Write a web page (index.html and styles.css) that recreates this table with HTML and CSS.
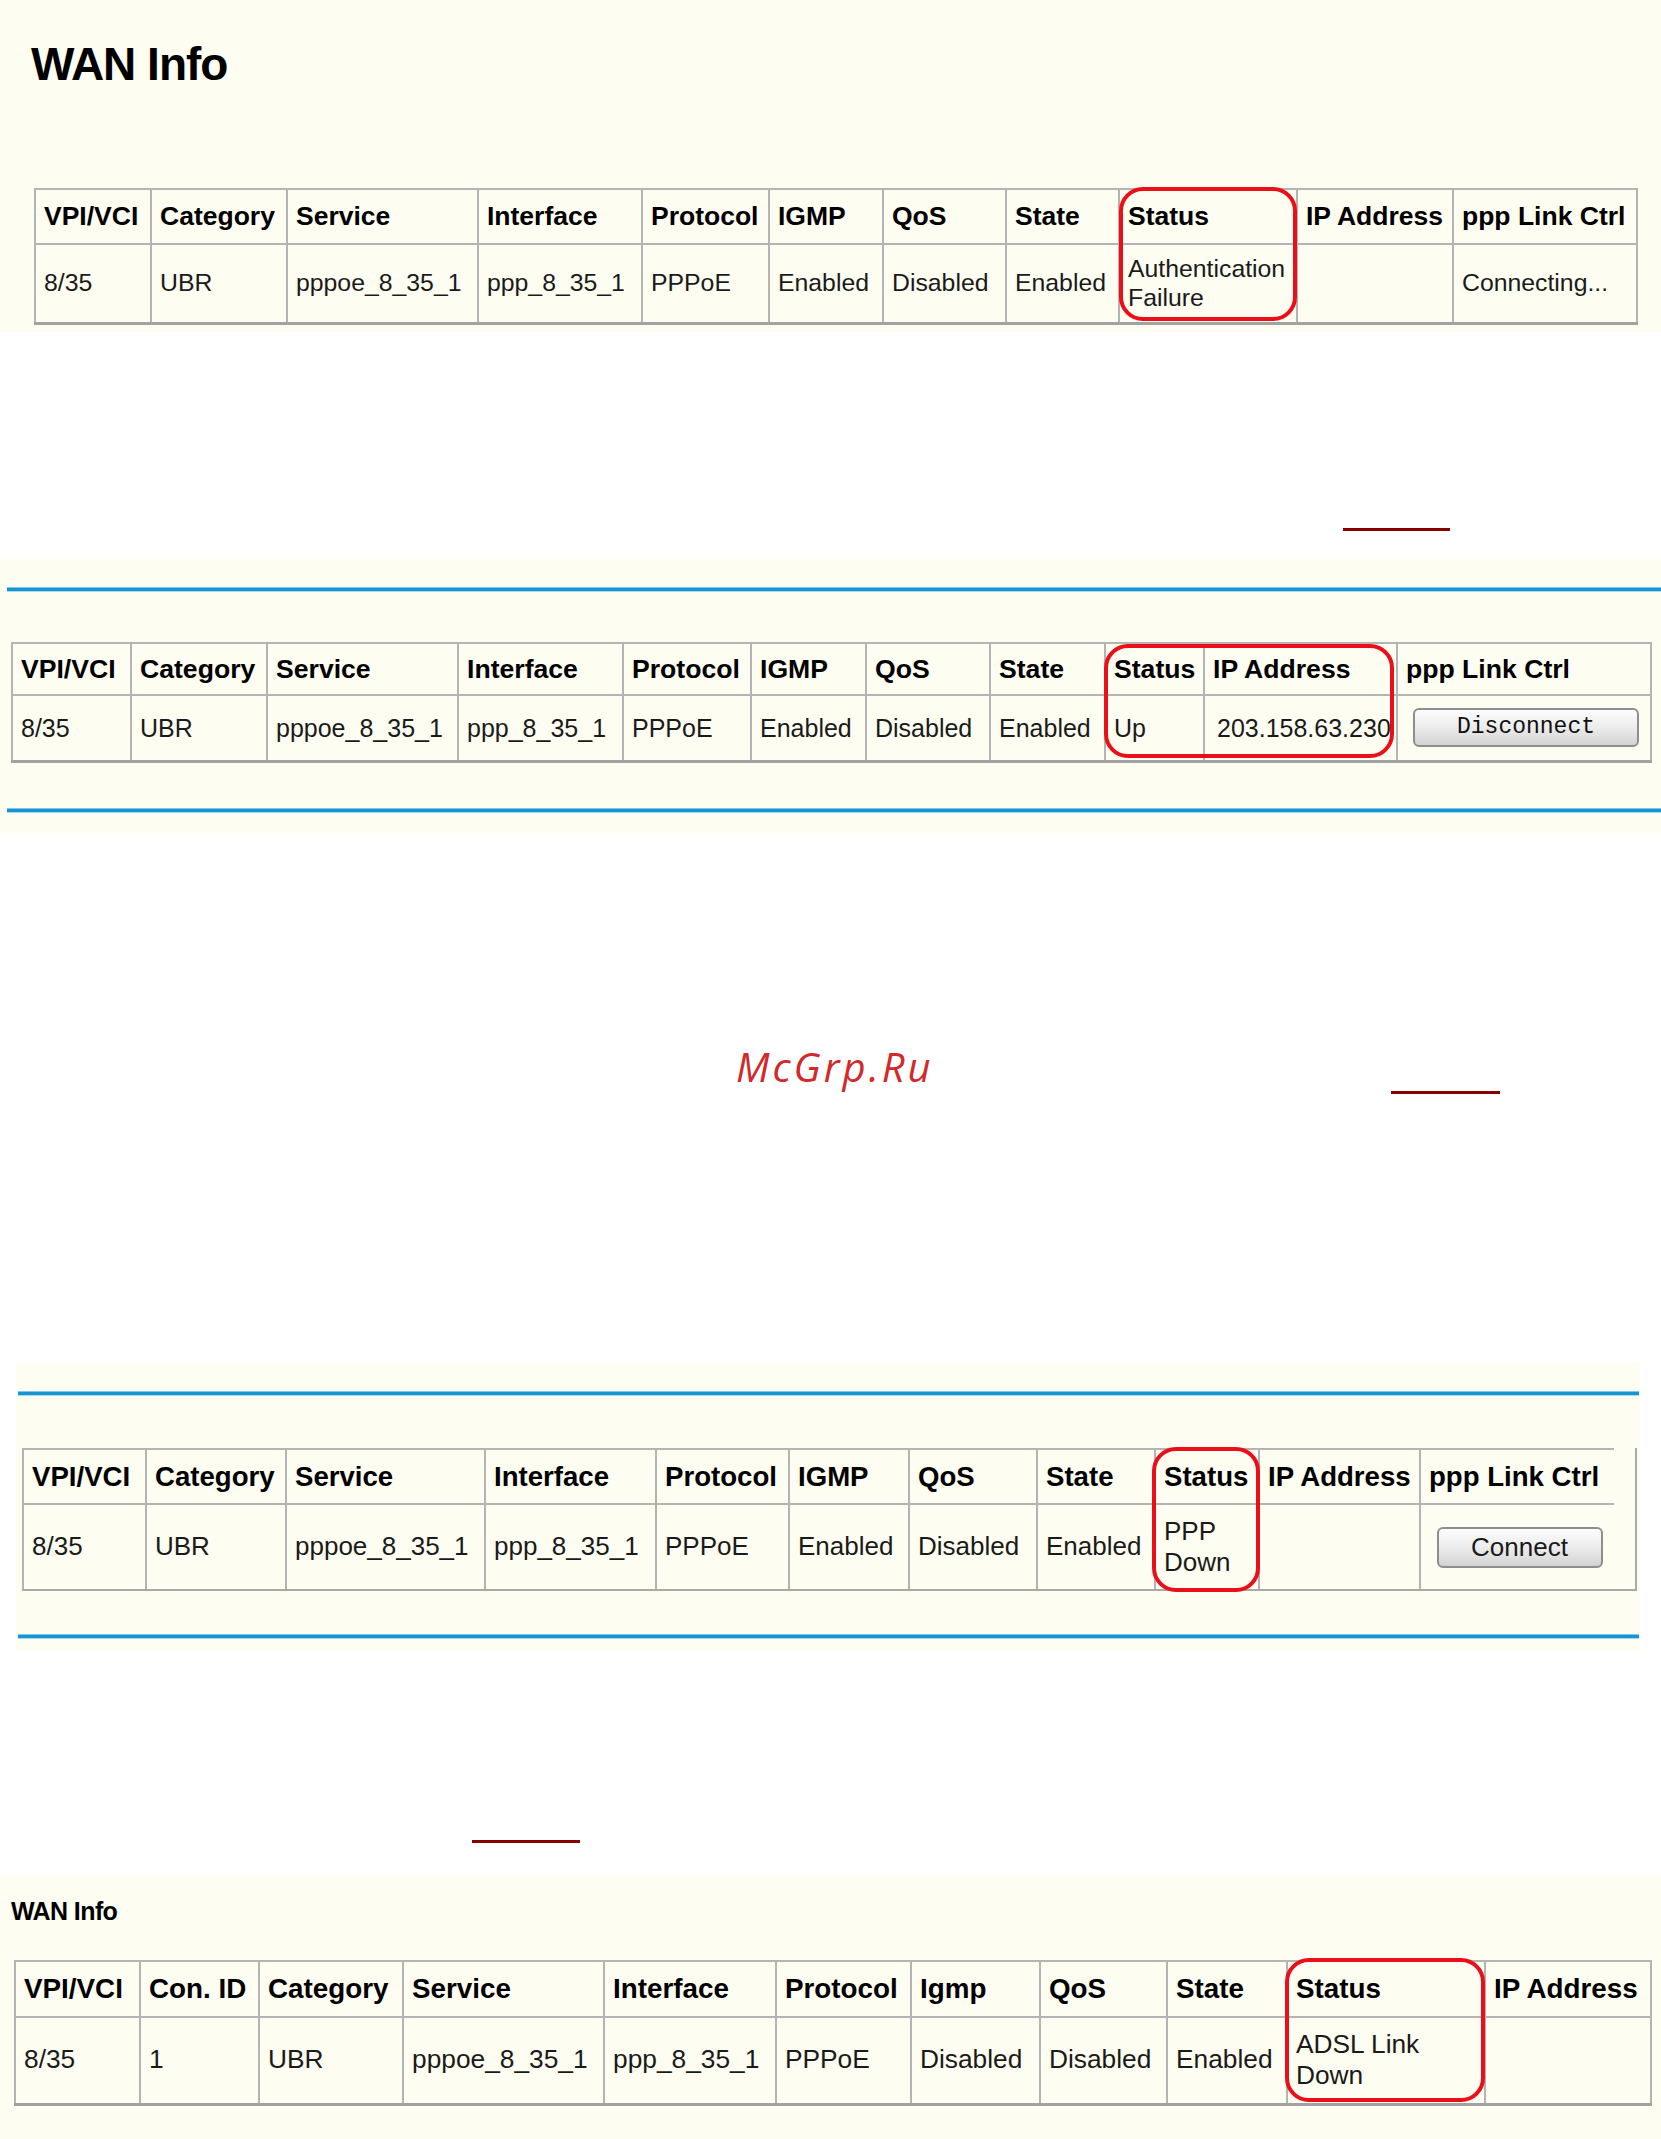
FILE: index.html
```html
<!DOCTYPE html>
<html lang="en">
<head>
<meta charset="utf-8">
<title>WAN Info</title>
<link rel="stylesheet" href="styles.css">
</head>
<body>

<section class="panel p1">
  <h1 class="title">WAN Info</h1>
  <div class="tablewrap t1wrap">
    <table class="wan t1">
      <colgroup><col><col><col><col><col><col><col><col><col><col><col></colgroup>
      <tr>
        <th>VPI/VCI</th><th>Category</th><th>Service</th><th>Interface</th><th>Protocol</th><th>IGMP</th><th>QoS</th><th>State</th><th>Status</th><th>IP Address</th><th>ppp Link Ctrl</th>
      </tr>
      <tr>
        <td>8/35</td><td>UBR</td><td>pppoe_8_35_1</td><td>ppp_8_35_1</td><td>PPPoE</td><td>Enabled</td><td>Disabled</td><td>Enabled</td><td class="wrap">Authentication Failure</td><td></td><td>Connecting...</td>
      </tr>
    </table>
    <div class="ring r1"></div>
  </div>
</section>

<div class="gap g1"><span class="rule rule1"></span></div>

<section class="panel p2">
  <div class="blue b2"></div>
  <div class="tablewrap t2wrap">
    <table class="wan t2">
      <colgroup><col><col><col><col><col><col><col><col><col><col><col></colgroup>
      <tr>
        <th>VPI/VCI</th><th>Category</th><th>Service</th><th>Interface</th><th>Protocol</th><th>IGMP</th><th>QoS</th><th>State</th><th>Status</th><th>IP Address</th><th>ppp Link Ctrl</th>
      </tr>
      <tr>
        <td>8/35</td><td>UBR</td><td>pppoe_8_35_1</td><td>ppp_8_35_1</td><td>PPPoE</td><td>Enabled</td><td>Disabled</td><td>Enabled</td><td>Up</td><td class="ip">203.158.63.230</td><td><button class="btn btn-disc" type="button">Disconnect</button></td>
      </tr>
    </table>
    <div class="ring r2"></div>
  </div>
  <div class="blue b2 bottom2"></div>
</section>

<div class="gap g2">
  <div class="mark">McGrp.Ru</div>
  <span class="rule rule2"></span>
</div>

<section class="panel p3">
  <div class="blue b3"></div>
  <div class="tablewrap t3wrap">
    <table class="wan t3">
      <colgroup><col><col><col><col><col><col><col><col><col><col><col></colgroup>
      <tr>
        <th>VPI/VCI</th><th>Category</th><th>Service</th><th>Interface</th><th>Protocol</th><th>IGMP</th><th>QoS</th><th>State</th><th>Status</th><th>IP Address</th><th>ppp Link Ctrl</th>
      </tr>
      <tr>
        <td>8/35</td><td>UBR</td><td>pppoe_8_35_1</td><td>ppp_8_35_1</td><td>PPPoE</td><td>Enabled</td><td>Disabled</td><td>Enabled</td><td class="wrap">PPP Down</td><td></td><td><button class="btn btn-conn" type="button">Connect</button></td>
      </tr>
    </table>
    <div class="ring r3"></div>
  </div>
  <div class="blue b3 bottom3"></div>
</section>

<div class="gap g3"><span class="rule rule3"></span></div>

<section class="panel p4">
  <h2 class="subtitle">WAN Info</h2>
  <div class="tablewrap t4wrap">
    <table class="wan t4">
      <colgroup><col><col><col><col><col><col><col><col><col><col><col></colgroup>
      <tr>
        <th>VPI/VCI</th><th>Con. ID</th><th>Category</th><th>Service</th><th>Interface</th><th>Protocol</th><th>Igmp</th><th>QoS</th><th>State</th><th>Status</th><th>IP Address</th>
      </tr>
      <tr>
        <td>8/35</td><td>1</td><td>UBR</td><td>pppoe_8_35_1</td><td>ppp_8_35_1</td><td>PPPoE</td><td>Disabled</td><td>Disabled</td><td>Enabled</td><td class="wrap">ADSL Link Down</td><td></td>
      </tr>
    </table>
    <div class="ring r4"></div>
  </div>
</section>

</body>
</html>
```

FILE: styles.css
```css
* { box-sizing: border-box; }

html, body {
  margin: 0;
  padding: 0;
  background: #ffffff;
}

body {
  width: 1661px;
  font-family: "Liberation Sans", Arial, sans-serif;
  color: #000;
}

/* cream screenshot panels */
.panel { background: #fdfdf1; }

.p1 { height: 332px; padding-top: 41px; }
.p2 { height: 274px; padding-top: 28px; }
.p3 { height: 287px; padding-top: 28px; margin-left: 16px; width: 1624px; }
.p4 { height: 264px; padding-top: 24px; }

.title {
  margin: 0 0 0 31px;
  height: 46px;
  font-size: 46px;
  line-height: 46px;
  font-weight: bold;
  letter-spacing: -1px;
}

.subtitle {
  margin: 0 0 0 11px;
  height: 25px;
  font-size: 25px;
  line-height: 25px;
  font-weight: bold;
  letter-spacing: -0.6px;
}

/* blue separators */
.blue {
  height: 5px;
  background: linear-gradient(#7cc8ec 0, #7cc8ec 1px, #1795d0 1px, #1795d0 4px, #a6d9f1 4px);
}
.b2 { margin-left: 7px; }
.bottom2 { margin-top: 45px; }
.b3 { margin-left: 2px; width: 1621px; }
.bottom3 { margin-top: 43px; }

/* table wrappers */
.tablewrap { position: relative; }
.t1wrap { margin: 101px 0 0 34px; width: 1602px; }
.t2wrap { margin: 50px 0 0 11px; width: 1639px; }
.t3wrap {
  margin: 52px 0 0 6px;
  width: 1615px;
  border-right: 2px solid #aaaaaa;
  border-bottom: 2px solid #aaaaaa;
}
.t4wrap { margin: 36px 0 0 14px; width: 1636px; }

/* tables */
.wan {
  border-collapse: collapse;
  table-layout: fixed;
  width: 100%;
}
.t3 { width: 1591px; }

.wan th,
.wan td {
  border: 2px solid #b4b4b4;
  padding: 0 4px 0 8px;
  text-align: left;
  vertical-align: middle;
  white-space: nowrap;
  overflow: visible;
}

.wan th { font-weight: bold; color: #000; }
.wan td { font-weight: normal; color: #1a1a1a; line-height: 1.2; }
.wan td.wrap { white-space: normal; }
.wan tr:last-child td { border-bottom-color: #a2a2a2; border-bottom-width: 3px; }
.t3 tr > *:last-child { border-right: none; }
.t3 tr:last-child td { border-bottom: none; }

.t1 th { height: 55px; font-size: 26.5px; }
.t1 td { height: 79px; font-size: 24.8px; }
.t2 th { height: 52px; font-size: 26.6px; }
.t2 td { height: 66px; font-size: 25px; }
.t3 th { height: 55px; font-size: 27.6px; }
.t3 td { height: 85px; font-size: 26px; }
.t4 th { height: 56px; font-size: 27.8px; }
.t4 td { height: 87px; font-size: 26.3px; }

.t2 td.ip { padding-left: 12px; }

/* column widths */
.t1 col:nth-child(1) { width: 116px; }
.t1 col:nth-child(2) { width: 136px; }
.t1 col:nth-child(3) { width: 191px; }
.t1 col:nth-child(4) { width: 164px; }
.t1 col:nth-child(5) { width: 127px; }
.t1 col:nth-child(6) { width: 114px; }
.t1 col:nth-child(7) { width: 123px; }
.t1 col:nth-child(8) { width: 113px; }
.t1 col:nth-child(9) { width: 178px; }
.t1 col:nth-child(10) { width: 156px; }
.t1 col:nth-child(11) { width: 184px; }

.t2 col:nth-child(1) { width: 119px; }
.t2 col:nth-child(2) { width: 136px; }
.t2 col:nth-child(3) { width: 191px; }
.t2 col:nth-child(4) { width: 165px; }
.t2 col:nth-child(5) { width: 128px; }
.t2 col:nth-child(6) { width: 115px; }
.t2 col:nth-child(7) { width: 124px; }
.t2 col:nth-child(8) { width: 115px; }
.t2 col:nth-child(9) { width: 99px; }
.t2 col:nth-child(10) { width: 193px; }
.t2 col:nth-child(11) { width: 254px; }

.t3 col:nth-child(1) { width: 123px; }
.t3 col:nth-child(2) { width: 140px; }
.t3 col:nth-child(3) { width: 199px; }
.t3 col:nth-child(4) { width: 171px; }
.t3 col:nth-child(5) { width: 133px; }
.t3 col:nth-child(6) { width: 120px; }
.t3 col:nth-child(7) { width: 128px; }
.t3 col:nth-child(8) { width: 118px; }
.t3 col:nth-child(9) { width: 104px; }
.t3 col:nth-child(10) { width: 161px; }
.t3 col:nth-child(11) { width: 194px; }

.t4 col:nth-child(1) { width: 125px; }
.t4 col:nth-child(2) { width: 119px; }
.t4 col:nth-child(3) { width: 144px; }
.t4 col:nth-child(4) { width: 201px; }
.t4 col:nth-child(5) { width: 172px; }
.t4 col:nth-child(6) { width: 135px; }
.t4 col:nth-child(7) { width: 129px; }
.t4 col:nth-child(8) { width: 127px; }
.t4 col:nth-child(9) { width: 120px; }
.t4 col:nth-child(10) { width: 198px; }
.t4 col:nth-child(11) { width: 166px; }

/* red highlight rings drawn over the status cells */
.ring {
  position: absolute;
  border: 4px solid #ea0f18;
  border-radius: 24px;
  pointer-events: none;
}
.r1 { left: 1085px; top: -1px; width: 178px; height: 134px; }
.r2 { left: 1093px; top: 2px; width: 290px; height: 114px; }
.r3 { left: 1130px; top: -1px; width: 108px; height: 145px; }
.r4 { left: 1271px; top: -2px; width: 200px; height: 144px; }

/* buttons */
.btn {
  display: block;
  margin: 0 auto;
  padding: 0;
  border: 2px solid #8e8e8e;
  border-radius: 6px;
  background: linear-gradient(#fcfcfc, #ececec 50%, #d3d3d3);
  color: #1a1a1a;
  line-height: 1;
}
.btn-disc {
  width: 226px;
  height: 39px;
  font-family: "Liberation Mono", "DejaVu Sans Mono", monospace;
  font-size: 23px;
  font-weight: normal;
  color: #111;
}
.btn-conn {
  width: 166px;
  height: 41px;
  font-family: "Liberation Sans", Arial, sans-serif;
  font-size: 26px;
}

/* white gaps between panels */
.gap { overflow: hidden; }
.g1 { height: 227px; padding-top: 196px; }
.g2 { height: 530px; padding-top: 213px; }
.g3 { height: 225px; padding-top: 190px; }

.rule {
  display: block;
  height: 3px;
  background: #860000;
}
.rule1 { margin-left: 1343px; width: 107px; }
.rule2 { margin-left: 1391px; width: 109px; margin-top: 4px; }
.rule3 { margin-left: 472px; width: 108px; }

.mark {
  margin-left: 736px;
  height: 41px;
  font-family: "Open Sans", "DejaVu Sans", sans-serif;
  font-style: italic;
  font-size: 40px;
  line-height: 41px;
  letter-spacing: 3px;
  color: #d12a2a;
}
```
